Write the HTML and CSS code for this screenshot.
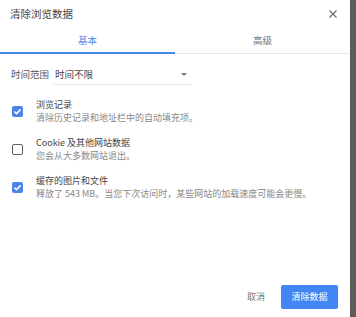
FILE: index.html
```html
<!DOCTYPE html>
<html lang="zh-CN">
<head>
<meta charset="UTF-8">
<title>清除浏览数据</title>
<link rel="stylesheet" href="styles.css">
</head>
<body>

<div class="dialog">
    <!-- Header -->
    <div class="dialog-header">
        <span class="dialog-title">清除浏览数据</span>
        <span class="close-button">
            <svg width="8" height="8" viewBox="0 0 8 8">
                <path d="M0.5 0.5 L7.5 7.5 M7.5 0.5 L0.5 7.5" stroke="#6b6b6b" stroke-width="1.2" fill="none"/>
            </svg>
        </span>
    </div>

    <!-- Tabs -->
    <div class="tabs">
        <div class="tab active">基本</div>
        <div class="tab">高级</div>
    </div>

    <!-- Time range -->
    <div class="time-row">
        <span class="time-label">时间范围</span>
        <div class="time-select">
            <span>时间不限</span>
            <span class="select-arrow"></span>
        </div>
    </div>

    <!-- Options -->
    <div class="options">
        <div class="option">
            <span class="checkbox checked">
                <svg width="11" height="11" viewBox="0 0 11 11">
                    <path d="M2.4 5.6 L4.5 7.6 L8.7 3.4" stroke="#fff" stroke-width="1.5" fill="none"/>
                </svg>
            </span>
            <div class="option-text">
                <div class="option-title">浏览记录</div>
                <div class="option-desc">清除历史记录和地址栏中的自动填充项。</div>
            </div>
        </div>
        <div class="option">
            <span class="checkbox"></span>
            <div class="option-text">
                <div class="option-title">Cookie 及其他网站数据</div>
                <div class="option-desc">您会从大多数网站退出。</div>
            </div>
        </div>
        <div class="option">
            <span class="checkbox checked">
                <svg width="11" height="11" viewBox="0 0 11 11">
                    <path d="M2.4 5.6 L4.5 7.6 L8.7 3.4" stroke="#fff" stroke-width="1.5" fill="none"/>
                </svg>
            </span>
            <div class="option-text">
                <div class="option-title">缓存的图片和文件</div>
                <div class="option-desc">释放了 543 MB。当您下次访问时，某些网站的加载速度可能会更慢。</div>
            </div>
        </div>
    </div>

    <!-- Footer -->
    <div class="dialog-footer">
        <span class="cancel-button">取消</span>
        <span class="confirm-button">清除数据</span>
    </div>
</div>
<div class="backdrop"></div>

</body>
</html>
```

FILE: styles.css
```css
body {
    margin: 0;
    height: 317px;
    display: flex;
    font-family: "Noto Sans CJK SC", "Noto Sans", "Liberation Sans", sans-serif;
    color: #444;
    overflow: hidden;
}

.dialog {
    width: 350px;
    height: 317px;
    background-color: #ffffff;
    display: flex;
    flex-direction: column;
}

.backdrop {
    flex: 1;
    background-color: #5c5c5c;
}

/* Header */
.dialog-header {
    height: 27px;
    display: flex;
    align-items: center;
    justify-content: space-between;
    padding: 0 13px 0 10px;
}

.dialog-title {
    font-size: 10.5px;
    color: #444;
}

.close-button {
    display: flex;
}

/* Tabs */
.tabs {
    display: flex;
    height: 26px;
    border-bottom: 1px solid #e8e8e8;
}

.tab {
    flex: 1;
    height: 27px;
    margin-bottom: -1px;
    box-sizing: border-box;
    display: flex;
    align-items: center;
    justify-content: center;
    font-size: 9.5px;
    color: #777;
    border-bottom: 2px solid transparent;
}

.tab.active {
    color: #4a84e4;
    border-bottom: 2px solid #4a86e8;
}

/* Time range */
.time-row {
    display: flex;
    align-items: flex-start;
    margin-top: 12px;
    padding-left: 11px;
    font-size: 9.5px;
    line-height: 16px;
}

.time-label {
    width: 42px;
    color: #555;
}

.time-select {
    width: 138px;
    box-sizing: border-box;
    display: flex;
    justify-content: space-between;
    align-items: center;
    padding: 0 4px 2px 2px;
    border-bottom: 1px solid #e6e6e6;
    color: #444;
}

.select-arrow {
    width: 0;
    height: 0;
    border-left: 3px solid transparent;
    border-right: 3px solid transparent;
    border-top: 3px solid #777;
}

/* Options */
.options {
    display: flex;
    flex-direction: column;
    gap: 12px;
    margin-top: 13px;
    padding-left: 12px;
}

.option {
    display: flex;
    align-items: center;
}

.checkbox {
    width: 11px;
    height: 11px;
    box-sizing: border-box;
    border: 1.5px solid #5f5f5f;
    border-radius: 2px;
    margin-right: 13px;
    display: flex;
}

.checkbox.checked {
    border: none;
    background-color: #4a86e8;
}

.option-text {
    font-size: 9px;
    line-height: 13px;
}

.option-title {
    color: #444;
}

.option-desc {
    color: #888;
}

/* Footer */
.dialog-footer {
    margin-top: auto;
    display: flex;
    justify-content: flex-end;
    align-items: center;
    gap: 4px;
    padding: 0 12px 8px 0;
    font-size: 9px;
}

.cancel-button {
    padding: 0 12px;
    line-height: 24px;
    color: #777;
}

.confirm-button {
    width: 57px;
    height: 24px;
    line-height: 24px;
    text-align: center;
    color: #ffffff;
    background-color: #4285f4;
    border-radius: 2px;
}
```
